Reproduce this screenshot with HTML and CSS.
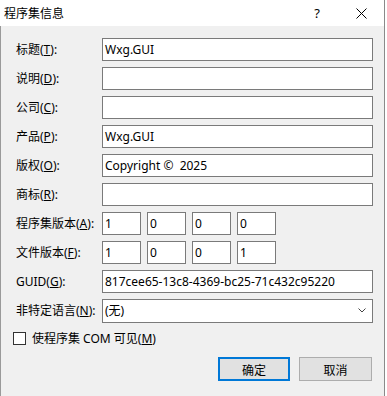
FILE: index.html
```html
<!DOCTYPE html>
<html lang="zh-CN">
<head>
<meta charset="utf-8">
<title>程序集信息</title>
<link rel="stylesheet" href="styles.css">
</head>
<body>
<div class="window">
  <div class="titlebar">
    <span class="title">程序集信息</span>
    <span class="help">?</span>
    <svg class="close" width="11" height="11" viewBox="0 0 11 11"><path d="M0.5 0.5 L10.5 10.5 M10.5 0.5 L0.5 10.5" stroke="#000" stroke-width="1" fill="none"/></svg>
  </div>
  <div class="content">
    <div class="row"><label class="lbl">标题(<u>T</u>):</label><div class="field">Wxg.GUI</div></div>
    <div class="row"><label class="lbl">说明(<u>D</u>):</label><div class="field"></div></div>
    <div class="row"><label class="lbl">公司(<u>C</u>):</label><div class="field"></div></div>
    <div class="row"><label class="lbl">产品(<u>P</u>):</label><div class="field">Wxg.GUI</div></div>
    <div class="row"><label class="lbl">版权(<u>O</u>):</label><div class="field">Copyright ©&nbsp; 2025</div></div>
    <div class="row"><label class="lbl">商标(<u>R</u>):</label><div class="field"></div></div>
    <div class="row"><label class="lbl">程序集版本(<u>A</u>):</label>
      <div class="ver"><div class="field small">1</div><div class="field small">0</div><div class="field small">0</div><div class="field small">0</div></div>
    </div>
    <div class="row"><label class="lbl">文件版本(<u>F</u>):</label>
      <div class="ver"><div class="field small">1</div><div class="field small">0</div><div class="field small">0</div><div class="field small">1</div></div>
    </div>
    <div class="row"><label class="lbl">GUID(<u>G</u>):</label><div class="field">817cee65-13c8-4369-bc25-71c432c95220</div></div>
    <div class="row"><label class="lbl">非特定语言(<u>N</u>):</label>
      <div class="field combo"><span>(无)</span>
        <svg class="arrow" width="8" height="5" viewBox="0 0 8 5"><path d="M0.5 0.5 L4 4 L7.5 0.5" stroke="#444" stroke-width="1" fill="none"/></svg>
      </div>
    </div>
    <div class="check"><span class="box"></span><span>使程序集 COM 可见(<u>M</u>)</span></div>
    <div class="buttons">
      <div class="btn default">确定</div>
      <div class="btn">取消</div>
    </div>
  </div>
</div>
</body>
</html>
```
FILE: styles.css
```css
html, body {
  margin: 0;
  padding: 0;
  background: #ffffff;
}
body {
  width: 387px;
  height: 396px;
  font-family: "Noto Sans", "Noto Sans CJK SC", sans-serif;
  font-size: 12px;
  color: #000;
}
.window {
  width: 384px;
  height: 396px;
  border-right: 1px solid #8a8a8a;
  display: flex;
  flex-direction: column;
}
.titlebar {
  height: 26px;
  background: #fff;
  display: flex;
  align-items: center;
  position: relative;
}
.title {
  margin-left: 4px;
  font-family: "Noto Sans CJK SC", sans-serif;
  font-size: 12px;
  line-height: 14px;
}
.help {
  margin-left: auto;
  margin-right: 0;
  font-family: "Noto Sans", sans-serif;
  font-size: 13px;
  line-height: 14px;
  position: relative;
  left: -64px;
}
.close {
  position: absolute;
  left: 356px;
  top: 8px;
}
.content {
  flex: 1;
  background: #f0f0f0;
  border-left: 1px solid #9a9a9a;
  padding: 12px 0 0 15px;
  display: flex;
  flex-direction: column;
}
.row {
  display: flex;
  align-items: center;
  height: 23px;
  margin-bottom: 6px;
}
.lbl {
  width: 86px;
  flex: none;
  font-family: "Noto Sans", "Noto Sans CJK SC", sans-serif;
  line-height: 16px;
  white-space: nowrap;
}
.field {
  box-sizing: border-box;
  width: 271px;
  height: 23px;
  border: 1px solid #7a7a7a;
  background: #fff;
  padding: 0 2px;
  line-height: 21px;
  white-space: nowrap;
  overflow: hidden;
}
.ver {
  display: flex;
  gap: 6px;
}
.field.small {
  width: 39px;
}
.combo {
  height: 24px;
  display: flex;
  align-items: center;
  justify-content: space-between;
  padding-right: 6px;
}
.arrow {
  display: block;
}
.check {
  display: flex;
  align-items: center;
  margin-top: 3px;
  margin-left: -3px;
  height: 14px;
}
.box {
  box-sizing: border-box;
  width: 13px;
  height: 13px;
  border: 1px solid #333;
  background: #fff;
  margin-right: 6px;
}
.buttons {
  display: flex;
  gap: 9px;
  margin-top: 12px;
  margin-left: 202px;
}
.btn {
  box-sizing: border-box;
  width: 73px;
  height: 24px;
  border: 1px solid #adadad;
  background: #e1e1e1;
  display: flex;
  align-items: center;
  justify-content: center;
  font-family: "Noto Sans CJK SC", sans-serif;
}
.btn.default {
  border: 2px solid #0078d7;
  width: 72px;
}
```
